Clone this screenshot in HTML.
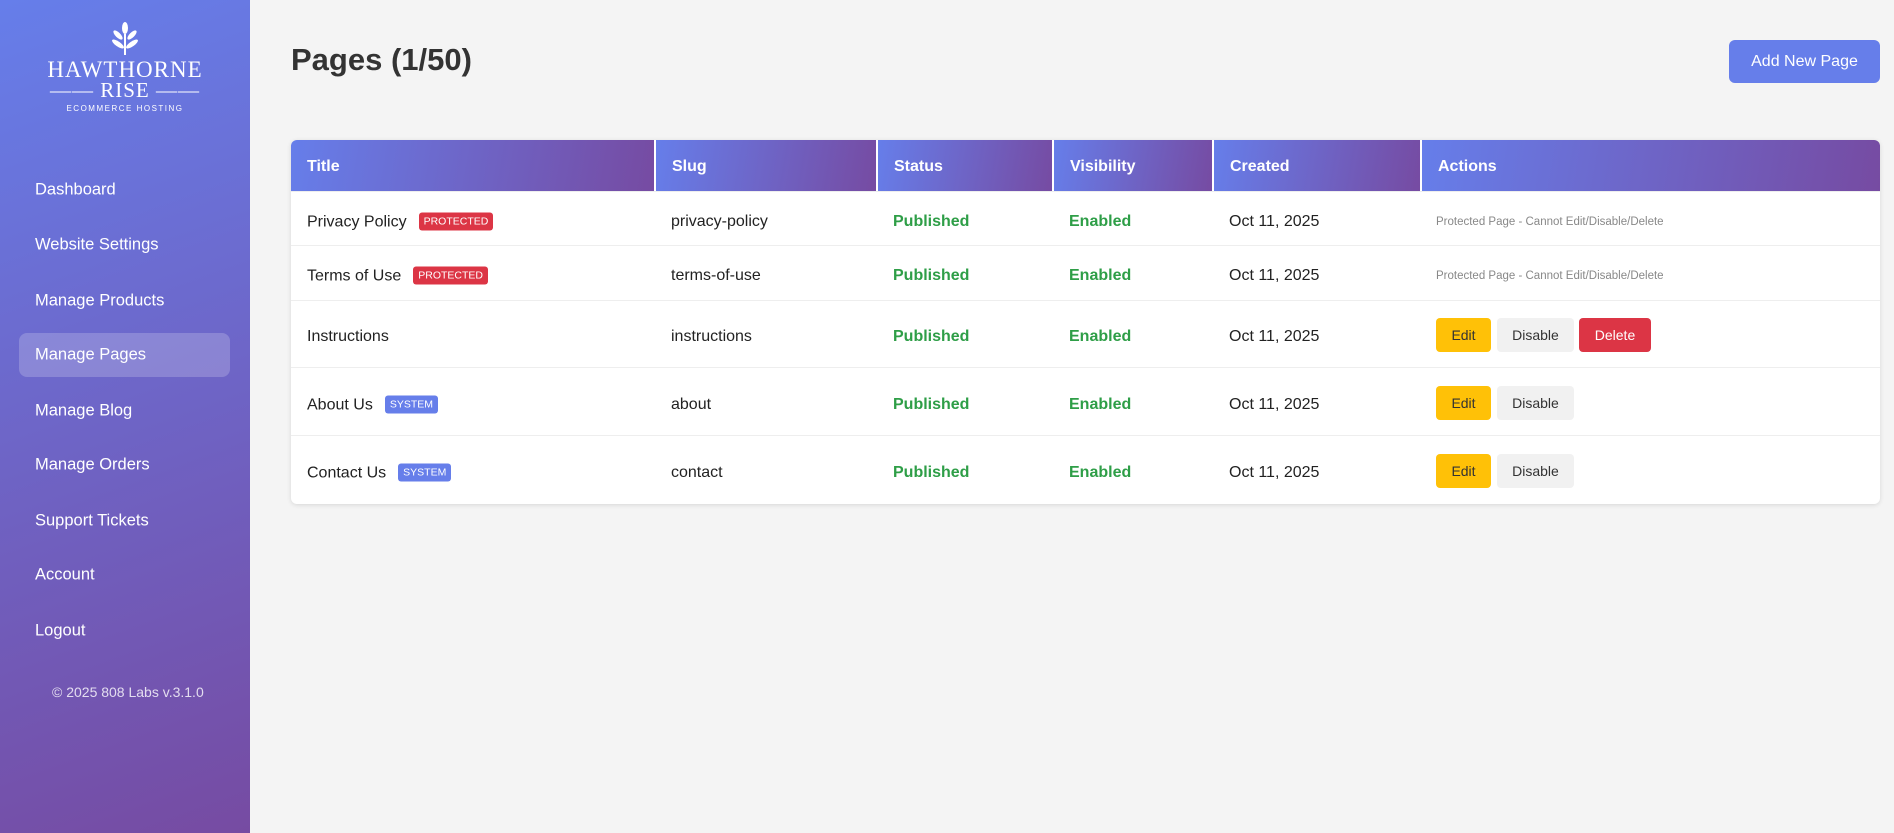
<!DOCTYPE html>
<html><head><style>
*{margin:0;padding:0;box-sizing:border-box}
body{width:1894px;height:833px;background:#f4f4f4;font-family:"Liberation Sans",sans-serif;position:relative;overflow:hidden}
.sb{position:absolute;left:0;top:0;width:250px;height:833px;background:linear-gradient(160deg,#667eea,#764ba2)}
.logo{position:absolute;left:0;width:250px;text-align:center;color:#fff}
.nav{position:absolute;left:35px;color:#fff;font-size:16.5px;transform:translateY(-50%)}
.act{position:absolute;left:19px;top:333px;width:211px;height:44px;background:rgba(255,255,255,.2);border-radius:8px}
h1{position:absolute;left:291px;top:42px;font-size:31px;color:#333;font-weight:bold}
.add{position:absolute;left:1729px;top:40px;width:151px;height:43px;background:#667eea;color:#fff;border-radius:6px;font-size:16px;line-height:43px;text-align:center}
.tbl{position:absolute;left:291px;top:140px;width:1589px;height:364px;background:#fff;border-radius:6px;box-shadow:0 1px 5px rgba(0,0,0,.12);overflow:hidden}
.th{position:absolute;top:0;height:51px;background:linear-gradient(100deg,#667eea,#764ba2);color:#fff;font-weight:bold;font-size:16px;line-height:53px;padding-left:16px}
.row{position:absolute;left:0;width:1589px;border-top:1px solid #eee}
.c{position:absolute;top:calc(50% + 3px);transform:translateY(-50%);font-size:16px;color:#222;white-space:nowrap}
.g{color:#2e9e47;font-weight:bold}
.bd{display:inline-block;color:#fff;font-size:10.5px;padding:3px 5px;border-radius:3px;margin-left:12px;vertical-align:2px}
.r{background:#dc3545}.b{background:#667eea}
.pm{font-size:11.5px;color:#888}
.btn{position:absolute;top:calc(50% + 1px);transform:translateY(-50%);height:34px;line-height:34px;text-align:center;border-radius:4px;font-size:14px}
</style></head><body>
<div class="sb">
<svg style="position:absolute;left:112px;top:22px" width="26" height="34" viewBox="0 0 26 34"><g fill="#fff"><ellipse cx="13" cy="6" rx="3" ry="6"/><ellipse cx="6" cy="13" rx="2.5" ry="6" transform="rotate(-45 6 13)"/><ellipse cx="20" cy="13" rx="2.5" ry="6" transform="rotate(45 20 13)"/><ellipse cx="6" cy="22" rx="2.5" ry="7" transform="rotate(-55 6 22)"/><ellipse cx="20" cy="22" rx="2.5" ry="7" transform="rotate(55 20 22)"/><rect x="12" y="12" width="2" height="21"/></g></svg>
<div class="logo" style="top:57px;font-family:'Liberation Serif',serif;font-size:23px;letter-spacing:1px">HAWTHORNE</div>
<div class="logo" style="top:78px;font-family:'Liberation Serif',serif;font-size:21px;letter-spacing:1px">&#8212;&#8212; RISE &#8212;&#8212;</div>
<div class="logo" style="top:104px;font-size:8px;letter-spacing:1.5px">ECOMMERCE HOSTING</div>
<div class="act"></div>
<div class="nav" style="top:190px">Dashboard</div>
<div class="nav" style="top:245px">Website Settings</div>
<div class="nav" style="top:301px">Manage Products</div>
<div class="nav" style="top:355px">Manage Pages</div>
<div class="nav" style="top:411px">Manage Blog</div>
<div class="nav" style="top:465px">Manage Orders</div>
<div class="nav" style="top:521px">Support Tickets</div>
<div class="nav" style="top:575px">Account</div>
<div class="nav" style="top:631px">Logout</div>
<div class="nav" style="top:692px;left:52px;font-size:14px;color:rgba(255,255,255,.8)">© 2025 808 Labs v.3.1.0</div>
</div>
<h1>Pages (1/50)</h1>
<div class="add">Add New Page</div>
<div class="tbl">
<div class="th" style="left:0;width:363px">Title</div>
<div class="th" style="left:365px;width:220px">Slug</div>
<div class="th" style="left:587px;width:174px">Status</div>
<div class="th" style="left:763px;width:158px">Visibility</div>
<div class="th" style="left:923px;width:206px">Created</div>
<div class="th" style="left:1131px;width:458px">Actions</div>

<div class="row" style="top:51px;height:54px">
<div class="c" style="left:16px">Privacy Policy<span class="bd r">PROTECTED</span></div>
<div class="c" style="left:380px">privacy-policy</div><div class="c g" style="left:602px">Published</div><div class="c g" style="left:778px">Enabled</div><div class="c" style="left:938px">Oct 11, 2025</div>
<div class="c pm" style="left:1145px">Protected Page - Cannot Edit/Disable/Delete</div></div>

<div class="row" style="top:105px;height:55px">
<div class="c" style="left:16px">Terms of Use<span class="bd r">PROTECTED</span></div>
<div class="c" style="left:380px">terms-of-use</div><div class="c g" style="left:602px">Published</div><div class="c g" style="left:778px">Enabled</div><div class="c" style="left:938px">Oct 11, 2025</div>
<div class="c pm" style="left:1145px">Protected Page - Cannot Edit/Disable/Delete</div></div>

<div class="row" style="top:160px;height:67px">
<div class="c" style="left:16px">Instructions</div>
<div class="c" style="left:380px">instructions</div><div class="c g" style="left:602px">Published</div><div class="c g" style="left:778px">Enabled</div><div class="c" style="left:938px">Oct 11, 2025</div>
<div class="btn" style="left:1145px;width:55px;background:#ffc107;color:#333">Edit</div>
<div class="btn" style="left:1206px;width:77px;background:#f1f1f1;color:#333">Disable</div>
<div class="btn" style="left:1288px;width:72px;background:#dc3545;color:#fff">Delete</div></div>

<div class="row" style="top:227px;height:68px">
<div class="c" style="left:16px">About Us<span class="bd b">SYSTEM</span></div>
<div class="c" style="left:380px">about</div><div class="c g" style="left:602px">Published</div><div class="c g" style="left:778px">Enabled</div><div class="c" style="left:938px">Oct 11, 2025</div>
<div class="btn" style="left:1145px;width:55px;background:#ffc107;color:#333">Edit</div>
<div class="btn" style="left:1206px;width:77px;background:#f1f1f1;color:#333">Disable</div></div>

<div class="row" style="top:295px;height:69px">
<div class="c" style="left:16px">Contact Us<span class="bd b">SYSTEM</span></div>
<div class="c" style="left:380px">contact</div><div class="c g" style="left:602px">Published</div><div class="c g" style="left:778px">Enabled</div><div class="c" style="left:938px">Oct 11, 2025</div>
<div class="btn" style="left:1145px;width:55px;background:#ffc107;color:#333">Edit</div>
<div class="btn" style="left:1206px;width:77px;background:#f1f1f1;color:#333">Disable</div></div>
</div>
</body></html>
